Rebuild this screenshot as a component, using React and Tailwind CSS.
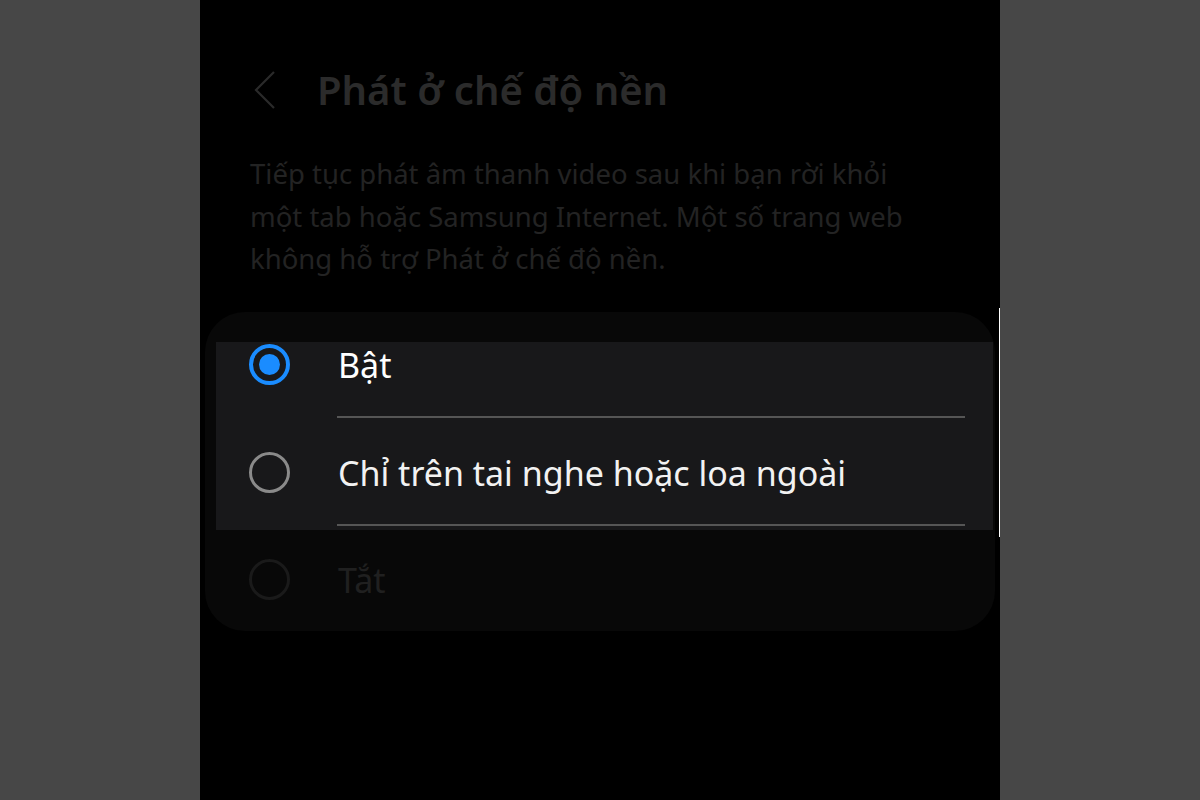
const font = { fontFamily: '"Noto Sans", "Open Sans", sans-serif' };

const Radio = ({ state }) => {
  if (state === "on") {
    return (
      <div className="flex justify-center items-center border-[4px] border-[#1a8cff] rounded-full w-[41px] h-[41px] shrink-0">
        <div className="bg-[#1a8cff] rounded-full w-[21px] h-[21px]" />
      </div>
    );
  }
  if (state === "dim") {
    return <div className="border-[3px] border-[#1a1a1a] rounded-full w-[41px] h-[41px] shrink-0" />;
  }
  return <div className="border-[3px] border-[#8a8a8a] rounded-full w-[41px] h-[41px] shrink-0" />;
};

const Option = ({ state, label, textClass }) => (
  <div className="flex items-center h-[42px]">
    <div className="flex pl-[33px] w-[122px] shrink-0">
      <Radio state={state} />
    </div>
    <span className={`text-[34px] leading-none ${textClass}`}>{label}</span>
  </div>
);

export default function App() {
  return (
    <div className="flex bg-[#474747] w-[1200px] h-[800px] overflow-hidden" style={font}>
      <div className="w-[200px] shrink-0" />
      <div className="relative bg-black w-[800px] h-full shrink-0">
        <div className="flex items-center pt-[68px] pl-[52px] h-[112px]">
          <svg width="26" height="40" viewBox="0 0 26 40" fill="none" className="shrink-0">
            <path d="M22 2 L4 20 L22 38" stroke="#2a2a2a" strokeWidth="2.2" />
          </svg>
          <h1 className="ml-[39px] font-semibold text-[#2b2b2b] text-[40px] leading-none">
            Phát ở chế độ nền
          </h1>
        </div>

        <p className="mt-[41px] pr-[40px] pl-[50px] text-[#232323] text-[27.5px] leading-[42.5px]">
          Tiếp tục phát âm thanh video sau khi bạn rời khỏi
          <br />
          một tab hoặc Samsung Internet. Một số trang web
          <br />
          không hỗ trợ Phát ở chế độ nền.
        </p>

        <div className="bg-[#080808] mt-[31px] mr-[5px] ml-[5px] pt-[30px] pb-[30px] rounded-[40px]">
          <div className="bg-[#18181a] mr-[2px] ml-[11px] pt-[2px] pb-[4px]">
            <Option state="on" label="Bật" textClass="text-white" />
            <div className="bg-[#555] mt-[30px] mr-[28px] ml-[121px] h-[2px]" />
            <div className="pt-[34px]">
              <Option state="off" label="Chỉ trên tai nghe hoặc loa ngoài" textClass="text-[#f2f2f2]" />
            </div>
            <div className="bg-[#555] mt-[30px] mr-[28px] ml-[121px] h-[2px]" />
          </div>
          <div className="mt-[29px] pl-[11px]">
            <Option state="dim" label="Tắt" textClass="text-[#202020]" />
          </div>
        </div>

        <div className="top-[308px] right-0 absolute bg-white w-px h-[229px]" />
      </div>
      <div className="w-[200px] shrink-0" />
    </div>
  );
}
